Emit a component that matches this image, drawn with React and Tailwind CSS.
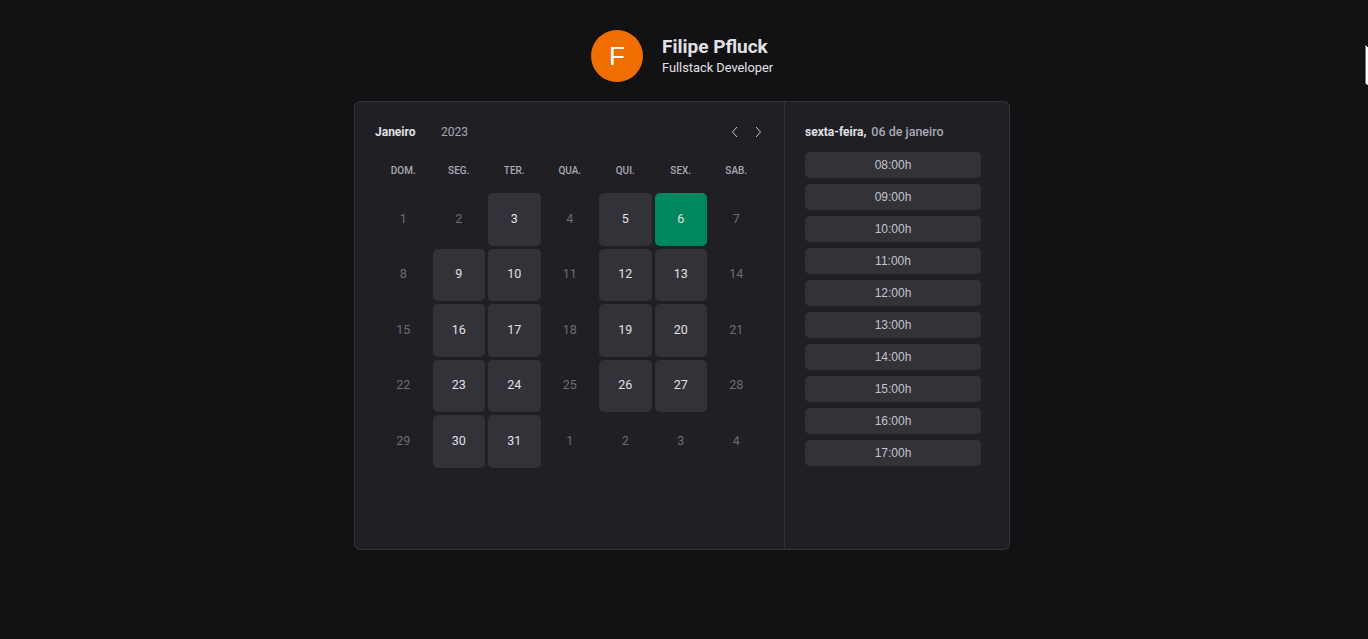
import React from "react";

const weekdays = ["DOM.", "SEG.", "TER.", "QUA.", "QUI.", "SEX.", "SAB."];
const enabled = new Set([3, 5, 9, 10, 12, 13, 16, 17, 19, 20, 23, 24, 26, 27, 30, 31]);

function buildDays() {
  const days = [];
  for (let d = 1; d <= 31; d++) days.push({ d, cur: true });
  for (let d = 1; d <= 4; d++) days.push({ d, cur: false });
  return days;
}

const slots = ["08:00h", "09:00h", "10:00h", "11:00h", "12:00h", "13:00h", "14:00h", "15:00h", "16:00h", "17:00h"];

function Chevron({ dir }) {
  return (
    <svg width="8" height="12" viewBox="0 0 8 12" fill="none">
      {dir === "left" ? (
        <polyline points="6,1 1.5,6 6,11" stroke="#c4c4cc" strokeWidth="1" />
      ) : (
        <polyline points="2,1 6.5,6 2,11" stroke="#c4c4cc" strokeWidth="1" />
      )}
    </svg>
  );
}

export default function App() {
  const days = buildDays();
  return (
    <div className="relative min-h-[639px] w-full bg-[#121214] font-['Roboto',sans-serif] overflow-hidden">
      <div className="w-[1364px] flex flex-col items-center pt-[30px]">
        <div className="flex items-center gap-[19px]">
          <div className="w-[52px] h-[52px] rounded-full bg-[#f06e00] flex items-center justify-center text-white text-[26px] leading-none font-['Liberation_Sans',sans-serif]">
            F
          </div>
          <div className="flex flex-col">
            <span className="text-[19px] leading-[20px] font-bold text-[#e1e1e6]">Filipe Pfluck</span>
            <span className="text-[12.8px] leading-[16px] text-[#e1e1e6] mt-[3px]">Fullstack Developer</span>
          </div>
        </div>

        <div className="mt-[19px] w-[656px] h-[449px] flex rounded-[6px] border border-[#323238] bg-[#202024]">
          <div className="w-[430px] px-[20px] pt-[21px] border-r border-[#323238]">
            <div className="flex items-center h-[18px]">
              <span className="text-[12px] font-bold text-[#e1e1e6] w-[66px]">Janeiro</span>
              <span className="text-[12px] text-[#a8a8b3]">2023</span>
              <div className="ml-auto flex items-center gap-[15px] pr-[2px]">
                <Chevron dir="left" />
                <Chevron dir="right" />
              </div>
            </div>
            <div className="grid grid-cols-[repeat(7,52.5px)] gap-x-[3px] w-[386px] mt-[22px] ml-[2px]">
              {weekdays.map((w) => (
                <div key={w} className="text-center text-[10px] font-medium text-[#a8a8b3] h-[16px] leading-[16px]">
                  {w}
                </div>
              ))}
            </div>
            <div className="grid grid-cols-[repeat(7,52.5px)] auto-rows-[52.5px] gap-[3px] w-[386px] mt-[14px] ml-[2px]">
              {days.map(({ d, cur }, i) => {
                const sel = cur && d === 6;
                const en = cur && enabled.has(d);
                return (
                  <div
                    key={i}
                    className={
                      "flex items-center justify-center rounded-[5px] text-[12.5px] " +
                      (sel
                        ? "bg-[#00875f] text-[#e1e1e6]"
                        : en
                        ? "bg-[#323238] text-[#e1e1e6]"
                        : "text-[#6c6c76]")
                    }
                  >
                    {d}
                  </div>
                );
              })}
            </div>
          </div>
          <div className="flex-1 pl-[20px] pt-[21px]">
            <div className="h-[18px] flex items-center text-[12px]">
              <span className="font-bold text-[#e1e1e6]">sexta-feira,</span>
              <span className="font-medium text-[#a8a8b3] ml-[5px] text-[12.5px]">06 de janeiro</span>
            </div>
            <div className="flex flex-col gap-[6px] mt-[11px] w-[176px]">
              {slots.map((s) => (
                <div
                  key={s}
                  className="h-[26px] rounded-[5px] bg-[#323238] flex items-center justify-center text-[12px] text-[#c4c4cc] font-['Liberation_Sans',sans-serif]"
                >
                  {s}
                </div>
              ))}
            </div>
          </div>
        </div>
      </div>
      <svg className="absolute left-[1364px] top-[44px]" width="8" height="44" viewBox="0 0 8 44">
        <polygon points="1,0 8,7 8,44 1,40" fill="#ffffff" stroke="#000" strokeWidth="1" />
      </svg>
    </div>
  );
}
